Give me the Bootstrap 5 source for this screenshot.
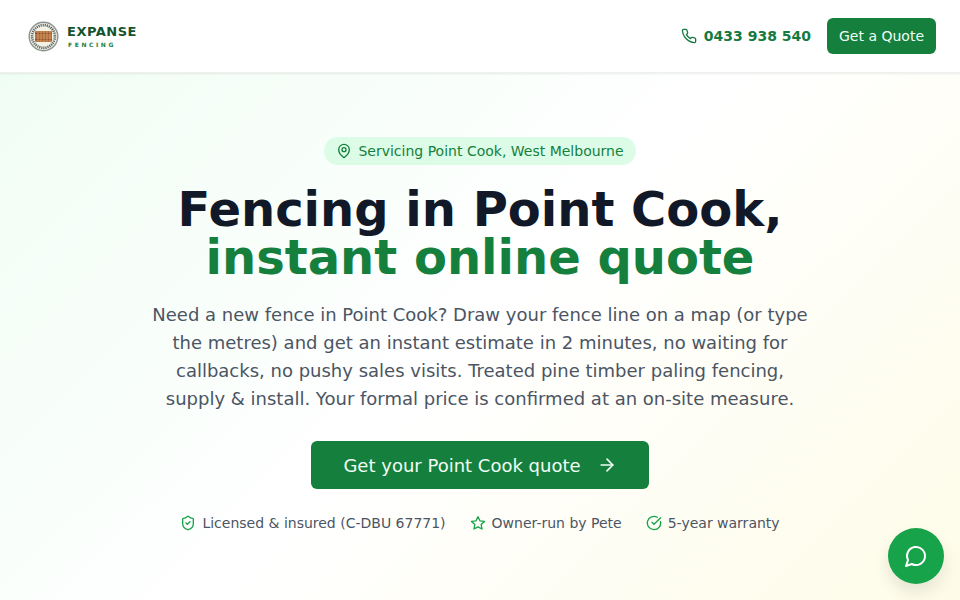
<!doctype html>
<html lang="en">
<head>
<meta charset="utf-8">
<title>Expanse Fencing</title>
<link href="https://cdn.jsdelivr.net/npm/bootstrap@5.3.0/dist/css/bootstrap.min.css" rel="stylesheet">
<style>
html,body{height:100%;overflow:hidden}
body{font-family:"DejaVu Sans",sans-serif;background:#fff}
.site-top{height:73px;background:#fff;padding:0 24px 0 28px;box-shadow:0 1px 2px rgba(0,0,0,.08);border-bottom:1px solid #eef1ef;position:relative}
.brand-mark{margin-top:1px}
.brand-name{font-size:13px;font-weight:700;color:#14532d;letter-spacing:.5px;line-height:16px}
.brand-sub{font-size:6px;font-weight:700;color:#15803d;letter-spacing:2.6px;line-height:8px;margin:1px 0 0 1px}
.phone-link{font-size:14px;font-weight:700;color:#157a42;text-decoration:none;gap:7px}
.btn-quote{background:#15803d;color:#f0fdf4;font-size:14px;border-radius:6px;padding:0 12px;height:36px;line-height:36px;border:0}
.hero-wrap{height:527px;background:linear-gradient(135deg,#f0fdf4 0%,#ffffff 50%,#fefce8 100%);padding-top:64px}
.place-pill{background:#dcfce7;color:#15803d;font-size:14px;height:28px;padding:0 12px;border-radius:14px;gap:6px}
.hero-title{font-size:48px;font-weight:700;line-height:48px;color:#111827;margin:19px 0 0}
.hero-title span{color:#15803d;display:block}
.hero-text{width:672px;font-size:18px;line-height:28px;color:#4b5563;margin:20px auto 0}
.btn-main{background:#15803d;color:#f0fdf4;font-size:18px;height:48px;padding:0 32px;border-radius:6px;border:0;margin-top:28px}
.trust-row{font-size:14px;color:#4b5563;gap:24px;margin-top:24px;height:20px}
.trust-item{gap:6px}
.chat-fab{position:fixed;right:16px;bottom:16px;width:56px;height:56px;border-radius:50%;background:#16a34a;border:0;box-shadow:0 8px 16px rgba(0,0,0,.1)}
</style>
</head>
<body>
<header class="site-top d-flex align-items-center justify-content-between">
  <a href="#" class="d-flex align-items-center gap-2 text-decoration-none">
    <svg class="brand-mark" width="31" height="31" viewBox="0 0 31 31" aria-hidden="true">
      <circle cx="15.5" cy="15.5" r="15" fill="#8b9490"/>
      <circle cx="15.5" cy="15.5" r="13.6" fill="#f2f1e8"/>
      <circle cx="15.5" cy="15.5" r="11.4" fill="none" stroke="#5c6660" stroke-width="2.6" stroke-dasharray="1.2 .9"/>
      <circle cx="15.5" cy="15.5" r="9" fill="#f4f0e2"/>
      <rect x="7" y="10" width="17" height="11" rx="1" fill="#b4713f"/>
      <path d="M7 12.5h17M7 18.5h17" stroke="#8c5127" stroke-width="1"/>
      <path d="M10 10v11M13 10v11M16 10v11M19 10v11M22 10v11" stroke="#d39a68" stroke-width=".9"/>
    </svg>
    <span class="d-block">
      <span class="brand-name d-block">EXPANSE</span>
      <span class="brand-sub d-block">FENCING</span>
    </span>
  </a>
  <div class="d-flex align-items-center gap-3">
    <a href="#" class="phone-link d-flex align-items-center">
      <svg width="16" height="16" viewBox="0 0 24 24" fill="none" stroke="currentColor" stroke-width="2" stroke-linecap="round" stroke-linejoin="round" aria-hidden="true"><path d="M22 16.92v3a2 2 0 0 1-2.18 2 19.79 19.79 0 0 1-8.63-3.07 19.5 19.5 0 0 1-6-6 19.79 19.79 0 0 1-3.07-8.67A2 2 0 0 1 4.11 2h3a2 2 0 0 1 2 1.72 12.84 12.84 0 0 0 .7 2.81 2 2 0 0 1-.45 2.11L8.09 9.91a16 16 0 0 0 6 6l1.27-1.27a2 2 0 0 1 2.11-.45 12.84 12.84 0 0 0 2.81.7A2 2 0 0 1 22 16.92z"/></svg>
      0433 938 540
    </a>
    <a href="#" class="btn btn-quote">Get a Quote</a>
  </div>
</header>
<main class="hero-wrap text-center">
  <div class="d-inline-flex align-items-center place-pill">
    <svg width="16" height="16" viewBox="0 0 24 24" fill="none" stroke="currentColor" stroke-width="2" stroke-linecap="round" stroke-linejoin="round" aria-hidden="true"><path d="M20 10c0 6-8 12-8 12s-8-6-8-12a8 8 0 0 1 16 0Z"/><circle cx="12" cy="10" r="3"/></svg>
    Servicing Point Cook, West Melbourne
  </div>
  <h1 class="hero-title">Fencing in Point Cook,<span>instant online quote</span></h1>
  <p class="hero-text">Need a new fence in Point Cook? Draw your fence line on a map (or type the metres) and get an instant estimate in 2 minutes, no waiting for callbacks, no pushy sales visits. Treated pine timber paling fencing, supply &amp; install. Your formal price is confirmed at an on-site measure.</p>
  <a href="#" class="btn btn-main d-inline-flex align-items-center gap-3">Get your Point Cook quote
    <svg width="20" height="20" viewBox="0 0 24 24" fill="none" stroke="currentColor" stroke-width="2" stroke-linecap="round" stroke-linejoin="round" aria-hidden="true"><path d="M5 12h14"/><path d="m12 5 7 7-7 7"/></svg>
  </a>
  <div class="trust-row d-flex justify-content-center align-items-center">
    <span class="trust-item d-flex align-items-center">
      <svg width="16" height="16" viewBox="0 0 24 24" fill="none" stroke="#16a34a" stroke-width="2" stroke-linecap="round" stroke-linejoin="round" aria-hidden="true"><path d="M20 13c0 5-3.5 7.5-7.66 8.95a1 1 0 0 1-.67-.01C7.5 20.5 4 18 4 13V6a1 1 0 0 1 1-1c2 0 4.5-1.2 6.24-2.72a1.17 1.17 0 0 1 1.52 0C14.51 3.81 17 5 19 5a1 1 0 0 1 1 1z"/><path d="m9 12 2 2 4-4"/></svg>
      Licensed &amp; insured (C-DBU 67771)
    </span>
    <span class="trust-item d-flex align-items-center">
      <svg width="16" height="16" viewBox="0 0 24 24" fill="none" stroke="#16a34a" stroke-width="2" stroke-linecap="round" stroke-linejoin="round" aria-hidden="true"><path d="M12 2.5l2.95 6.2 6.8.9-4.98 4.7 1.27 6.75L12 17.8l-6.04 3.25 1.27-6.75L2.25 9.6l6.8-.9z"/></svg>
      Owner-run by Pete
    </span>
    <span class="trust-item d-flex align-items-center">
      <svg width="16" height="16" viewBox="0 0 24 24" fill="none" stroke="#16a34a" stroke-width="2" stroke-linecap="round" stroke-linejoin="round" aria-hidden="true"><path d="M21.8 10A10 10 0 1 1 17 3.34"/><path d="m9 11 3 3L22 4"/></svg>
      5-year warranty
    </span>
  </div>
</main>
<button class="chat-fab d-flex align-items-center justify-content-center" aria-label="Chat">
  <svg width="24" height="24" viewBox="0 0 24 24" fill="none" stroke="#fff" stroke-width="2" stroke-linecap="round" stroke-linejoin="round" aria-hidden="true"><path d="M7.9 20A9 9 0 1 0 4 16.1L2 22Z"/></svg>
</button>
<script src="https://cdn.jsdelivr.net/npm/bootstrap@5.3.0/dist/js/bootstrap.bundle.min.js"></script>
</body>
</html>
